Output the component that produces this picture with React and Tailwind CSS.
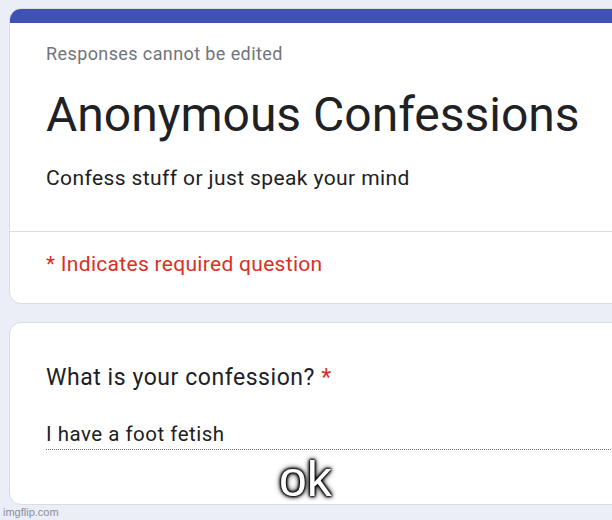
export default function App() {
  return (
    <div className="relative w-[612px] h-[520px] overflow-hidden bg-[#ebedf7]" style={{ fontFamily: "Roboto, 'Liberation Sans', sans-serif" }}>
      <div className="pl-[9px] pt-[8px] w-[640px]">
        <div className="rounded-[12px] bg-white border border-[#dadce0] overflow-hidden">
          <div className="h-[14px] bg-[#3f51b5]" />
          <div className="pl-[36px] pt-[20px] pb-[39px]">
            <div className="text-[18px] tracking-[0.4px] text-[#70757a] leading-[22px]">Responses cannot be edited</div>
            <div className="mt-[22px] text-[48px] leading-[56px] text-[#202124]">Anonymous Confessions</div>
            <div className="mt-[21px] text-[21px] tracking-[0.4px] leading-[28px] text-[#202124]">Confess stuff or just speak your mind</div>
          </div>
          <div className="border-t border-[#dadce0] pl-[36px] pt-[18px] pb-[25px]">
            <div className="text-[21px] tracking-[0.3px] leading-[28px] text-[#d93025]">* Indicates required question</div>
          </div>
        </div>
        <div className="mt-[18px] h-[183px] rounded-[12px] bg-white border border-[#dadce0] pl-[36px] pt-[40px]">
          <div className="text-[23px] tracking-[0.55px] leading-[30px] text-[#202124]">
            What is your confession? <span className="text-[#d93025]">*</span>
          </div>
          <div className="mt-[27px] text-[20.5px] leading-[28px] text-[#202124] tracking-[0.5px] border-b border-dotted border-[#70757a] pb-[1px]">
            I have a foot fetish
          </div>
        </div>
      </div>
      <div
        className="absolute left-[279px] top-[451px] text-[50px] leading-[56px] text-white"
        style={{ fontFamily: "'Liberation Sans', Arial, sans-serif", textShadow: "0 0 2px #000, 0 0 3px #000, 0 0 3px #000, 0 0 4px #000, 0 0 6px #000" }}
      >
        ok
      </div>
      <div className="absolute left-[3px] top-[504px] text-[11px] text-[#8a8f99]" style={{ fontFamily: "'Liberation Sans', Arial, sans-serif" }}>
        imgflip.com
      </div>
    </div>
  );
}
